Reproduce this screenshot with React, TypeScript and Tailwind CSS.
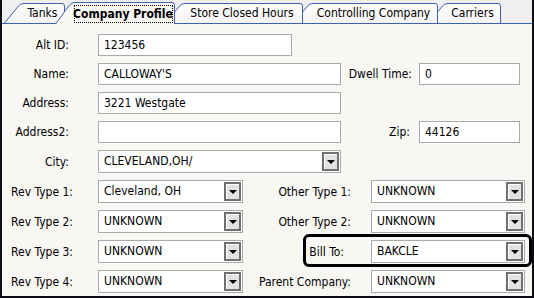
import React from 'react';

type Tab = { label: string; w: number; active?: boolean; z: string };

const tabs: Tab[] = [
  { label: 'Tanks', w: 61, z: 'z-[5]' },
  { label: 'Company Profile', w: 120, active: true, z: 'z-[9]' },
  { label: 'Store Closed Hours', w: 138, z: 'z-[3]' },
  { label: 'Controlling Company', w: 145, z: 'z-[2]' },
  { label: 'Carriers', w: 73, z: 'z-[1]' },
];

const TabItem: React.FC<{ tab: Tab; first: boolean }> = ({ tab, first }) => {
  const h = tab.active ? 22 : 20;
  const w = tab.w;
  // folder style tab: slanted left side, rounded top right corner
  const outline = `M0.5 ${h} L14.5 3 Q16.5 0.5 20 0.5 L${w - 3} 0.5 Q${w - 0.5} 0.5 ${w - 0.5} 3 L${w - 0.5} ${h}`;
  return (
    <div
      className={`relative shrink-0 ${tab.z} ${first ? 'ml-[2px]' : '-ml-[10px]'} ${tab.active ? 'h-[22px] -mb-px' : 'h-[20px]'}`}
      style={{ width: w }}
    >
      <svg className="absolute inset-0" width={w} height={h} viewBox={`0 0 ${w} ${h}`}>
        <defs>
          <linearGradient id="tabfill" x1="0" y1="0" x2="0" y2="1">
            <stop offset="0" stopColor="#ffffff" />
            <stop offset="1" stopColor="#f3f3f3" />
          </linearGradient>
        </defs>
        <path
          d={outline + ' Z'}
          fill={tab.active ? '#f8f7f4' : 'url(#tabfill)'}
          stroke="none"
        />
        <path d={outline} fill="none" stroke="#3d63b0" strokeWidth="1" />
      </svg>
      {tab.active && (
        <div className="absolute left-[19px] right-[2px] top-[3px] bottom-[1px] border border-dotted border-black" />
      )}
      <div
        className={`relative flex h-full items-center justify-center pl-[18px] pr-[2px] text-[12px] text-black ${tab.active ? 'font-bold pt-px' : ''}`}
      >
        {tab.label}
      </div>
    </div>
  );
};

const TextBox: React.FC<{ value?: string; w: string }> = ({ value, w }) => (
  <div className={`flex h-[22px] ${w} items-center border border-[#a9a9a9] bg-white pl-[5px] text-[12px] text-black`}>
    {value}
  </div>
);

const Combo: React.FC<{ value: string; w: string }> = ({ value, w }) => (
  <div className={`flex h-[23px] ${w} items-center justify-between border border-[#a9a9a9] bg-white pl-[5px] pr-px text-[12px] text-black`}>
    <span className="pb-[2px]">{value}</span>
    <div className="flex h-[19px] w-[17px] items-center justify-center border-2 border-[#707070] bg-[#e2e2e2] shadow-[inset_1px_1px_0_#ffffff]">
      <div className="h-0 w-0 border-x-[4px] border-t-[4px] border-x-transparent border-t-black" />
    </div>
  </div>
);

const Label: React.FC<{ text: string; w: string; extra?: string }> = ({ text, w, extra }) => (
  <span className={`${w} shrink-0 text-right text-[12px] text-black ${extra ?? ''}`}>{text}</span>
);

export default function App() {
  return (
    <div className="flex h-[298px] w-[534px] flex-col overflow-hidden border-x-2 border-b-2 border-[#0c0c14] bg-[#efefef] font-['DejaVu_Sans_Condensed','DejaVu_Sans',sans-serif]">
      <div className="relative z-10 flex h-[23px] shrink-0 items-end">
        {tabs.map((t, i) => (
          <TabItem key={t.label} tab={t} first={i === 0} />
        ))}
      </div>

      <div className="flex flex-1 flex-col border-t border-[#3d63b0] bg-[#f8f7f4] pt-[10px]">
        <div className="flex flex-col gap-[7px]">
          <div className="flex items-center">
            <Label text="Alt ID:" w="w-[67px]" />
            <div className="ml-[29px]">
              <TextBox value="123456" w="w-[194px]" />
            </div>
          </div>
          <div className="flex items-center">
            <Label text="Name:" w="w-[67px]" />
            <div className="ml-[29px]">
              <TextBox value="CALLOWAY'S" w="w-[243px]" />
            </div>
            <Label text="Dwell Time:" w="w-[71px]" />
            <div className="ml-[7px]">
              <TextBox value="0" w="w-[101px]" />
            </div>
          </div>
          <div className="flex items-center">
            <Label text="Address:" w="w-[67px]" />
            <div className="ml-[29px]">
              <TextBox value="3221 Westgate" w="w-[243px]" />
            </div>
          </div>
          <div className="flex items-center">
            <Label text="Address2:" w="w-[67px]" />
            <div className="ml-[29px]">
              <TextBox w="w-[243px]" />
            </div>
            <Label text="Zip:" w="w-[69px]" />
            <div className="ml-[9px]">
              <TextBox value="44126" w="w-[101px]" />
            </div>
          </div>
          <div className="flex items-center">
            <Label text="City:" w="w-[67px]" />
            <div className="ml-[29px]">
              <Combo value="CLEVELAND,OH/" w="w-[243px]" />
            </div>
          </div>
        </div>

        <div className="mt-[7px] flex flex-col gap-[7px]">
          {[
            ['Rev Type 1:', 'Cleveland, OH', 'Other Type 1:', 'UNKNOWN'],
            ['Rev Type 2:', 'UNKNOWN', 'Other Type 2:', 'UNKNOWN'],
            ['Rev Type 3:', 'UNKNOWN', 'Bill To:', 'BAKCLE'],
            ['Rev Type 4:', 'UNKNOWN', 'Parent Company:', 'UNKNOWN'],
          ].map(([l1, v1, l2, v2]) => (
            <div key={l1} className="relative flex items-center">
              <Label text={l1} w="w-[71px]" />
              <div className="ml-[25px]">
                <Combo value={v1} w="w-[145px]" />
              </div>
              <Label text={l2} w="w-[108px]" extra={l2 === 'Bill To:' ? 'pr-[7px]' : ''} />
              <div className="ml-[20px]">
                <Combo value={v2} w="w-[154px]" />
              </div>
              {l2 === 'Bill To:' && (
                <div className="absolute left-[301px] top-[-6px] h-[33px] w-[229px] rounded-[6px] border-[3px] border-black" />
              )}
            </div>
          ))}
        </div>
      </div>
    </div>
  );
}
